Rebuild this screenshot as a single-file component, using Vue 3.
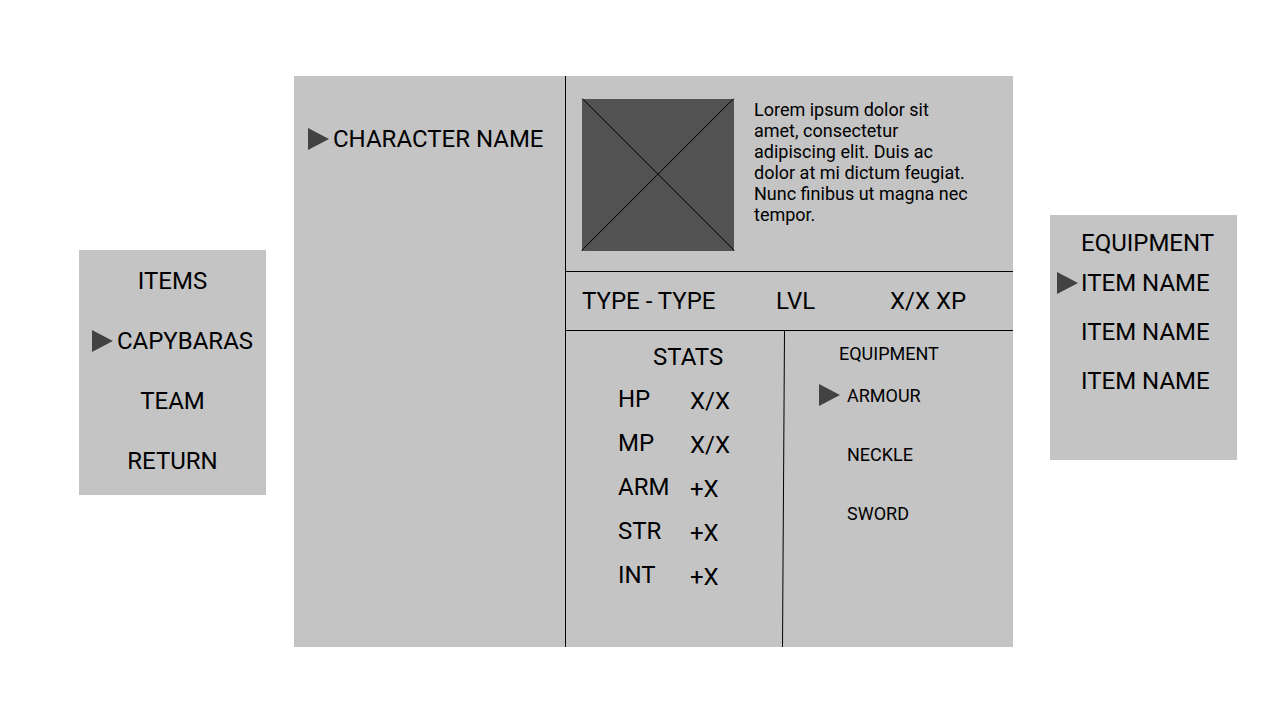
<script setup>
import { ref } from 'vue'

const menu = ['ITEMS', 'CAPYBARAS', 'TEAM', 'RETURN']
const menuIndex = ref(1)

const characters = ['CHARACTER NAME']
const characterIndex = ref(0)

const stats = [
  { name: 'HP', value: 'X/X' },
  { name: 'MP', value: 'X/X' },
  { name: 'ARM', value: '+X' },
  { name: 'STR', value: '+X' },
  { name: 'INT', value: '+X' }
]

const slots = ['ARMOUR', 'NECKLE', 'SWORD']
const slotIndex = ref(0)

const items = ['ITEM NAME', 'ITEM NAME', 'ITEM NAME']
const itemIndex = ref(0)
</script>

<template>
  <div class="screen">
    <nav class="panel menu" aria-label="Menu">
      <button v-for="(entry, i) in menu" :key="entry" type="button" class="row" @click="menuIndex = i">
        <span v-if="menuIndex === i" class="arrow"></span>{{ entry }}
      </button>
    </nav>

    <main class="panel sheet">
      <section class="roster" aria-label="Characters">
        <button v-for="(name, i) in characters" :key="name" type="button" class="row" @click="characterIndex = i">
          <span class="arrow" :class="{ off: characterIndex !== i }"></span>{{ name }}
        </button>
      </section>

      <div class="details">
        <section class="profile">
          <svg class="portrait" viewBox="0 0 152 152" role="img" aria-label="Portrait">
            <rect width="152" height="152" fill="#525252" />
            <path d="M0.4 -0.4L152.4 151.6M-0.4 151.6L151.6 -0.4" stroke="#000" fill="none" />
          </svg>
          <p class="bio">
            Lorem ipsum dolor sit amet, consectetur adipiscing elit. Duis ac dolor at mi dictum feugiat. Nunc finibus ut magna nec tempor.
          </p>
        </section>

        <section class="summary">
          <span>TYPE - TYPE</span>
          <span>LVL</span>
          <span>X/X XP</span>
        </section>

        <div class="lower">
          <section class="stats">
            <table>
              <caption>STATS</caption>
              <tbody>
                <tr v-for="stat in stats" :key="stat.name">
                  <th scope="row">{{ stat.name }}</th>
                  <td>{{ stat.value }}</td>
                </tr>
              </tbody>
            </table>
          </section>

          <svg class="divider" viewBox="0 0 3 316" preserveAspectRatio="none" aria-hidden="true">
            <path d="M2.5 0L0.5 316" stroke="#000" fill="none" />
          </svg>

          <section class="worn">
            <h2>EQUIPMENT</h2>
            <div class="slots">
              <button v-for="(slot, i) in slots" :key="slot" type="button" class="row small" @click="slotIndex = i">
                <span class="arrow" :class="{ off: slotIndex !== i }"></span>{{ slot }}
              </button>
            </div>
          </section>
        </div>
      </div>
    </main>

    <aside class="panel inventory">
      <h2>EQUIPMENT</h2>
      <div class="items">
        <button v-for="(item, i) in items" :key="i" type="button" class="row" @click="itemIndex = i">
          <span class="arrow" :class="{ off: itemIndex !== i }"></span>{{ item }}
        </button>
      </div>
    </aside>
  </div>
</template>

<style>
body {
  margin: 0;
  background: #fff;
}
</style>

<style scoped>
.screen {
  display: grid;
  grid-template-columns: 187fr 719fr 196fr;
  align-items: start;
  column-gap: 28px;
  padding: 76px 43px 72px 79px;
  font-family: Roboto, "Liberation Sans", sans-serif;
  font-size: 24px;
  line-height: 28px;
  color: #000;
}

.panel {
  background: #c4c4c4;
}

h2 {
  margin: 0;
  font: inherit;
}

.row {
  display: flex;
  align-items: center;
  gap: 4px;
  margin: 0;
  padding: 0;
  border: 0;
  background: none;
  color: inherit;
  font: inherit;
  white-space: nowrap;
  cursor: pointer;
}

.arrow {
  flex: none;
  width: 21px;
  height: 22px;
  background: #424242;
  clip-path: polygon(0 0, 100% 50%, 0 100%);
}

.arrow.off {
  visibility: hidden;
}

.menu {
  display: flex;
  flex-direction: column;
  align-items: center;
  gap: 32px;
  margin-top: 174px;
  padding: 17px 0 20px;
}

.sheet {
  display: grid;
  grid-template-columns: 271fr 448fr;
}

.roster {
  padding: 49px 14px;
}

.details {
  border-left: 1px solid #000;
}

.profile {
  display: flex;
  align-items: flex-start;
  gap: 20px;
  padding: 23px 16px 20px;
}

.portrait {
  flex: none;
  width: 152px;
  height: 152px;
  overflow: visible;
}

.bio {
  max-width: 220px;
  margin: 0;
  font-size: 18px;
  line-height: 21px;
}

.summary {
  display: grid;
  grid-template-columns: 194fr 114fr 123fr;
  padding: 15px 0 15px 16px;
  border-top: 1px solid #000;
  border-bottom: 1px solid #000;
  white-space: nowrap;
}

.lower {
  display: grid;
  grid-template-columns: 216fr 3px 228fr;
}

.stats {
  padding: 12px 0 50px 52px;
}

.divider {
  width: 3px;
  height: 100%;
}

table {
  border-collapse: collapse;
}

caption {
  padding: 0 0 6px 35px;
  text-align: left;
}

th,
td {
  box-sizing: border-box;
  height: 44px;
  padding: 0;
  font-weight: 400;
  text-align: left;
}

th {
  width: 72px;
}

td {
  padding-top: 4px;
}

.worn {
  padding: 12px 0 12px 34px;
  font-size: 18px;
  line-height: 21px;
}

.worn h2 {
  padding-left: 20px;
}

.slots {
  display: flex;
  flex-direction: column;
  align-items: flex-start;
  gap: 37px;
  padding-top: 20px;
}

.row.small {
  gap: 7px;
}

.inventory {
  margin: 139px 0 0 9px;
  padding: 14px 0 65px 7px;
}

.inventory h2 {
  padding-left: 24px;
}

.items {
  display: flex;
  flex-direction: column;
  align-items: flex-start;
  gap: 21px;
  padding-top: 12px;
}

.items .row {
  gap: 3px;
}
</style>
